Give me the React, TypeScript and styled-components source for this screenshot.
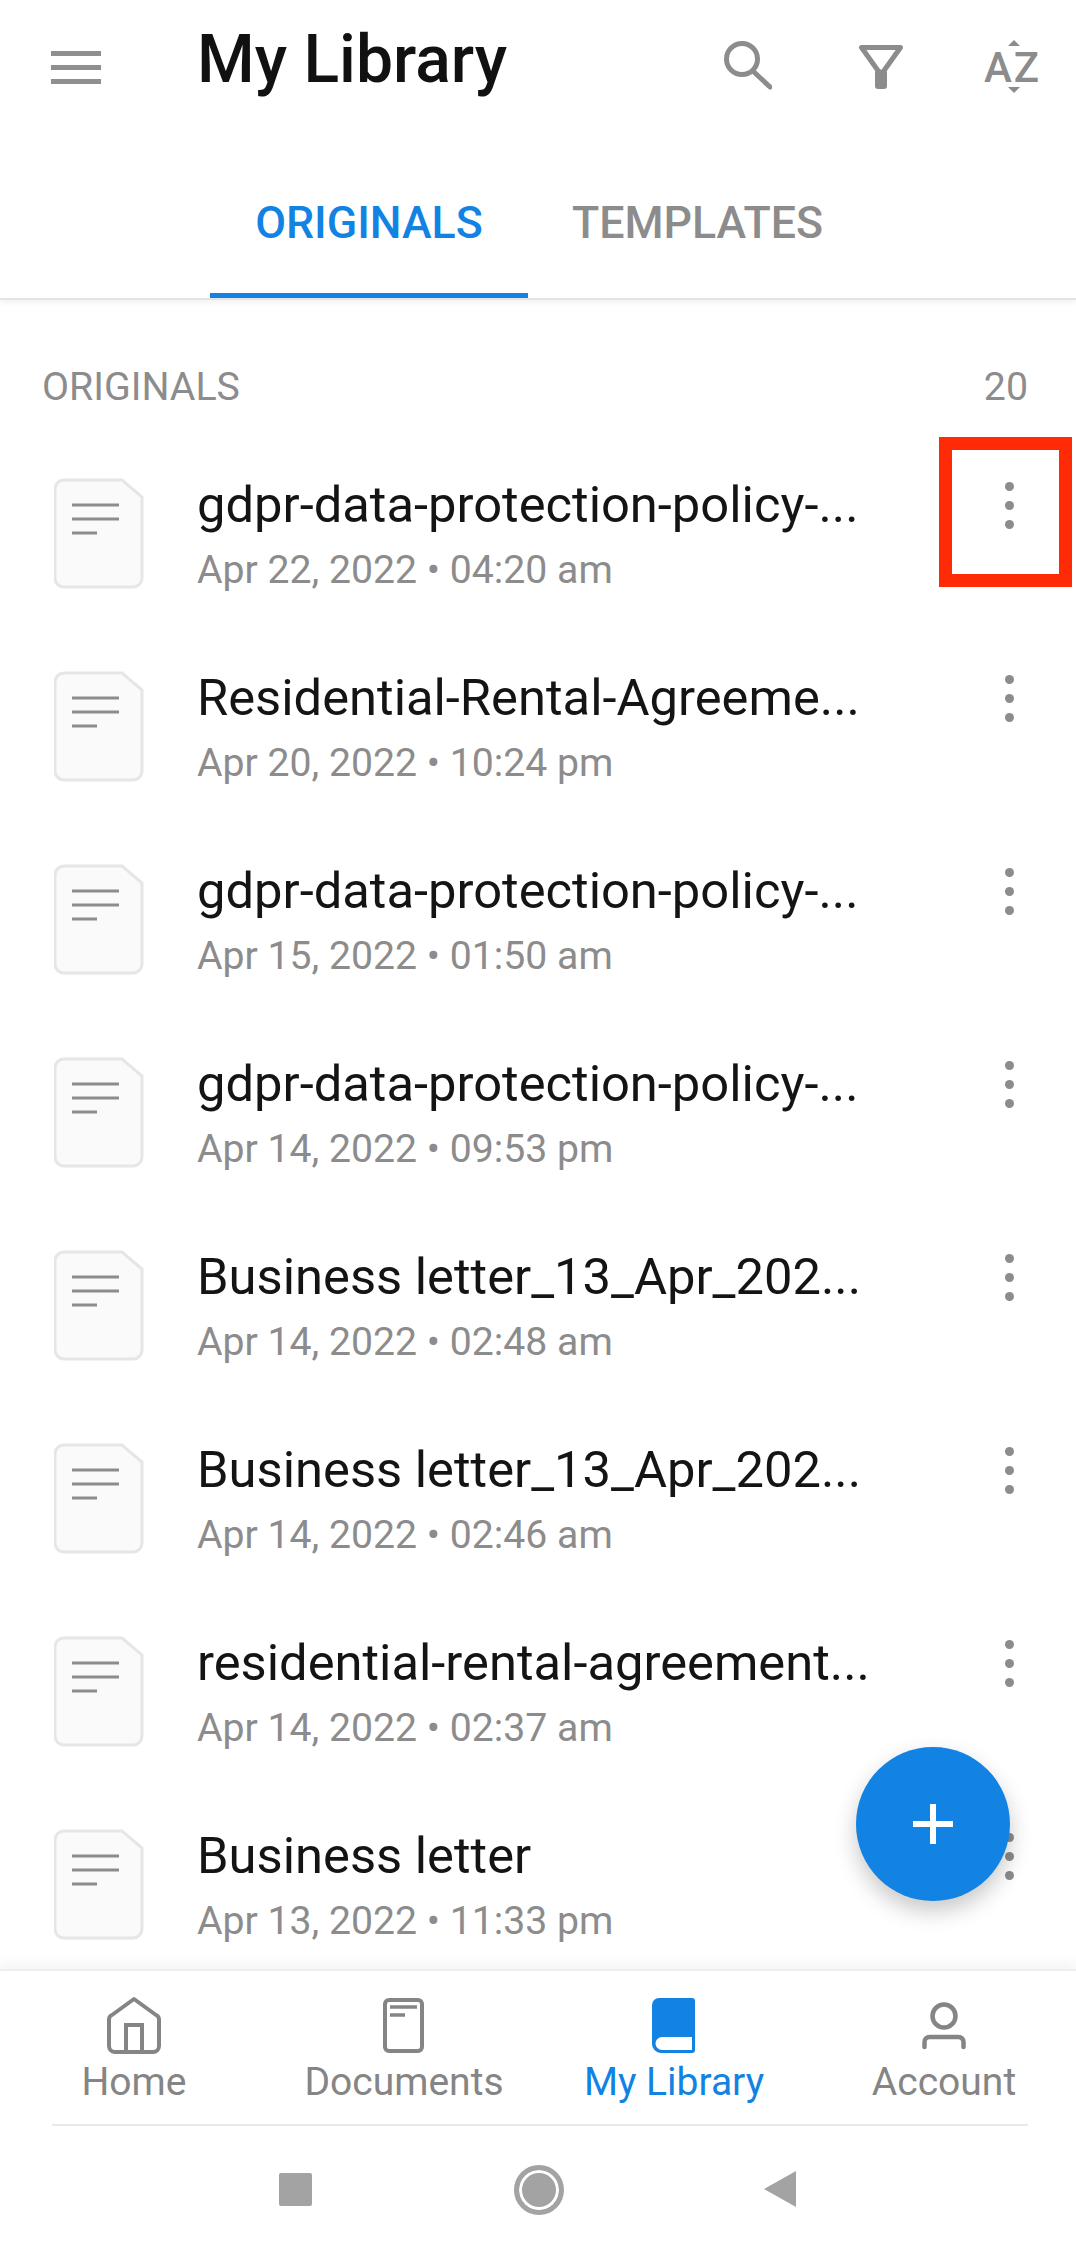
import React from 'react';
import styled, { createGlobalStyle } from 'styled-components';

const BLUE = '#1283e3';
const GREY = '#8c8c8c';

const GlobalStyle = createGlobalStyle`
  html, body {
    margin: 0;
    padding: 0;
    background: #ffffff;
  }
  * {
    box-sizing: border-box;
  }
`;

const Screen = styled.div`
  position: relative;
  width: 1076px;
  height: 2254px;
  display: flex;
  flex-direction: column;
  overflow: hidden;
  background: #ffffff;
  font-family: Roboto, 'Liberation Sans', sans-serif;
`;

const TopBar = styled.header`
  height: 122px;
  flex: none;
  display: flex;
  align-items: flex-start;
  padding: 10px 0 0 51px;
`;

const Burger = styled.div`
  width: 50px;
  height: 33px;
  margin-top: 41px;
  flex: none;
  display: flex;
  flex-direction: column;
  justify-content: space-between;

  span {
    display: block;
    height: 5px;
    background: #8f8f8f;
  }
`;

const Title = styled.h1`
  margin: 16px 0 0 96px;
  flex: 1;
  font-size: 66px;
  line-height: 68px;
  font-weight: 500;
  color: #111111;
`;

const TopIcons = styled.div`
  display: flex;
  width: 354px;
  flex: none;
  gap: 84px;
  padding-top: 26px;
`;

const TopIcon = styled.svg`
  width: 50px;
  height: 54px;
  flex: none;
  color: ${GREY};
`;

const SortIcon = styled.div`
  position: relative;
  width: 56px;
  height: 54px;
  margin: 4px 0 0 -6px;
  flex: none;
  display: flex;
  align-items: center;
  font-size: 42px;
  font-weight: 500;
  letter-spacing: 2px;
  color: ${GREY};

  &::before,
  &::after {
    content: '';
    position: absolute;
    left: 24px;
    border-left: 6px solid transparent;
    border-right: 6px solid transparent;
  }
  &::before {
    top: 0;
    border-bottom: 6px solid ${GREY};
  }
  &::after {
    bottom: 1px;
    border-top: 6px solid ${GREY};
  }
`;

const Tabs = styled.nav`
  height: 178px;
  flex: none;
  display: flex;
  padding-left: 210px;
  border-bottom: 2px solid #e4e4e4;
  box-shadow: 0 3px 5px rgba(0, 0, 0, 0.05);
  position: relative;
`;

const Tab = styled.div<{ $active?: boolean }>`
  width: ${({ $active }) => ($active ? '318px' : 'auto')};
  height: 176px;
  margin-right: ${({ $active }) => ($active ? '44px' : '0')};
  padding-top: 74px;
  text-align: center;
  font-size: 44.7px;
  line-height: 54px;
  font-weight: 500;
  color: ${({ $active }) => ($active ? BLUE : GREY)};
  border-bottom: 5px solid ${({ $active }) => ($active ? BLUE : 'transparent')};
`;

const List = styled.div`
  flex: 1;
  min-height: 0;
  overflow: hidden;
`;

const SectionHead = styled.div`
  display: flex;
  justify-content: space-between;
  padding: 65px 48px 0 42px;
  height: 177px;
  font-size: 39.3px;
  line-height: 44px;
  color: ${GREY};
`;

const Row = styled.div`
  height: 193px;
  display: flex;
  align-items: flex-start;
  padding-left: 54px;
`;

const FileIcon = styled.svg`
  width: 90px;
  height: 112px;
  flex: none;
  margin-top: 1px;
`;

const RowText = styled.div`
  width: 690px;
  margin-left: 53px;
  flex: none;
`;

const RowName = styled.div`
  font-size: 50.7px;
  line-height: 56px;
  color: #141414;
  white-space: nowrap;
`;

const RowDate = styled.div`
  margin-top: 15px;
  font-size: 39.2px;
  line-height: 44px;
  color: ${GREY};
  white-space: nowrap;
`;

const MenuButton = styled.div<{ $marked?: boolean }>`
  position: relative;
  width: 9px;
  height: 47px;
  margin: 5px 0 0 118px;
  flex: none;
  display: flex;
  flex-direction: column;
  justify-content: space-between;

  i {
    display: block;
    width: 9px;
    height: 9px;
    border-radius: 50%;
    background: ${GREY};
  }

  ${({ $marked }) =>
    $marked &&
    `
    &::after {
      content: '';
      position: absolute;
      left: -66px;
      top: -45px;
      width: 133px;
      height: 150px;
      box-sizing: border-box;
      border: 13px solid #ff2a06;
    }
  `}
`;

const Fab = styled.div`
  position: absolute;
  left: 856px;
  top: 1747px;
  width: 154px;
  height: 154px;
  border-radius: 50%;
  background: ${BLUE};
  box-shadow: 0 10px 22px rgba(0, 0, 0, 0.22);
  display: flex;
  align-items: center;
  justify-content: center;
`;

const BottomNav = styled.div`
  height: 155px;
  flex: none;
  display: grid;
  grid-template-columns: repeat(4, 270px);
  margin-left: -1px;
  padding-top: 25px;
  border-top: 2px solid #eeeeee;
  box-shadow: 0 -8px 10px rgba(0, 0, 0, 0.04);
  background: #ffffff;
  position: relative;
`;

const NavItem = styled.div<{ $active?: boolean }>`
  display: flex;
  flex-direction: column;
  align-items: center;
  color: ${({ $active }) => ($active ? BLUE : '#858585')};
  font-size: 39px;
  line-height: 46px;

  svg {
    width: 60px;
    height: 60px;
    margin-bottom: 3px;
  }
`;

const SystemBar = styled.div`
  height: 130px;
  flex: none;
  position: relative;
  display: flex;
  align-items: flex-start;
  padding: 44px 0 0 279px;

  &::before {
    content: '';
    position: absolute;
    left: 52px;
    right: 48px;
    top: 0;
    height: 2px;
    background: #eaeaea;
  }
`;

const SquareKey = styled.div`
  width: 33px;
  height: 33px;
  margin-top: 5px;
  background: #a3a3a3;
  border-radius: 2px;
`;

const CircleKey = styled.div`
  width: 50px;
  height: 50px;
  margin: -3px 0 0 202px;
  border-radius: 50%;
  background: #a3a3a3;
  border: 5px solid #a3a3a3;
  box-shadow: inset 0 0 0 3px #ffffff;
`;

const BackKey = styled.div`
  width: 0;
  height: 0;
  margin: 3px 0 0 200px;
  border-top: 18px solid transparent;
  border-bottom: 18px solid transparent;
  border-right: 32px solid #a3a3a3;
`;

const files = [
  { name: 'gdpr-data-protection-policy-...', date: 'Apr 22, 2022 • 04:20 am' },
  { name: 'Residential-Rental-Agreeme...', date: 'Apr 20, 2022 • 10:24 pm' },
  { name: 'gdpr-data-protection-policy-...', date: 'Apr 15, 2022 • 01:50 am' },
  { name: 'gdpr-data-protection-policy-...', date: 'Apr 14, 2022 • 09:53 pm' },
  { name: 'Business letter_13_Apr_202...', date: 'Apr 14, 2022 • 02:48 am' },
  { name: 'Business letter_13_Apr_202...', date: 'Apr 14, 2022 • 02:46 am' },
  { name: 'residential-rental-agreement...', date: 'Apr 14, 2022 • 02:37 am' },
  { name: 'Business letter', date: 'Apr 13, 2022 • 11:33 pm' },
];

const DocGlyph = () => (
  <FileIcon viewBox="0 0 90 112" fill="none">
    <path
      d="M10 2H68L88 19V100a9 9 0 0 1-9 9H10a9 9 0 0 1-9-9V11a9 9 0 0 1 9-9Z"
      fill="#fafafa"
      stroke="#e6e6e6"
      strokeWidth="3"
    />
    <path d="M18 27H65M18 41H65M18 55H43" stroke="#8c8c8c" strokeWidth="3" />
  </FileIcon>
);

export default function App() {
  return (
    <Screen>
      <GlobalStyle />
      <TopBar>
        <Burger>
          <span />
          <span />
          <span />
        </Burger>
        <Title>My Library</Title>
        <TopIcons>
          <TopIcon viewBox="0 0 50 54" fill="none" stroke="currentColor">
            <circle cx="20" cy="23" r="15.5" strokeWidth="5" />
            <path d="M32 36L48 51" strokeWidth="5" strokeLinecap="round" />
          </TopIcon>
          <TopIcon viewBox="0 0 50 54" fill="none" stroke="currentColor">
            <path d="M5.5 11.5H44.5L27 36H23Z" strokeWidth="5" strokeLinejoin="round" />
            <rect x="19" y="34" width="12" height="19" rx="3" fill="currentColor" stroke="none" />
          </TopIcon>
          <SortIcon>AZ</SortIcon>
        </TopIcons>
      </TopBar>
      <Tabs>
        <Tab $active>ORIGINALS</Tab>
        <Tab>TEMPLATES</Tab>
      </Tabs>
      <List>
        <SectionHead>
          <span>ORIGINALS</span>
          <span>20</span>
        </SectionHead>
        {files.map((file, i) => (
          <Row key={i}>
            <DocGlyph />
            <RowText>
              <RowName>{file.name}</RowName>
              <RowDate>{file.date}</RowDate>
            </RowText>
            <MenuButton $marked={i === 0}>
              <i />
              <i />
              <i />
            </MenuButton>
          </Row>
        ))}
      </List>
      <BottomNav>
        <NavItem>
          <svg viewBox="0 0 60 60" fill="none" stroke="currentColor" strokeWidth="4">
            <path d="M30 3L8 19a5 5 0 0 0-3 5V50a6 6 0 0 0 6 6H49a6 6 0 0 0 6-6V24a5 5 0 0 0-3-5Z" strokeLinejoin="round" />
            <path d="M22 56V29H38V56" />
          </svg>
          Home
        </NavItem>
        <NavItem>
          <svg viewBox="0 0 60 60" fill="none" stroke="currentColor" strokeWidth="4">
            <rect x="11" y="4" width="37" height="51" rx="4" />
            <path d="M16 11H43M16 19H31" strokeWidth="3.5" />
          </svg>
          Documents
        </NavItem>
        <NavItem $active>
          <svg viewBox="0 0 60 60" fill="none">
            <path d="M15 2H48a3 3 0 0 1 3 3V54a3 3 0 0 1-3 3H17a9 9 0 0 1-9-9V9a7 7 0 0 1 7-7Z" fill="currentColor" />
            <path d="M18 41H48V54H18a6.5 6.5 0 0 1 0-13Z" fill="#ffffff" />
          </svg>
          My Library
        </NavItem>
        <NavItem>
          <svg viewBox="0 0 60 60" fill="none" stroke="currentColor" strokeWidth="4.5">
            <circle cx="30" cy="20" r="11.5" />
            <path d="M10.5 51V46a5 5 0 0 1 5-5H44.5a5 5 0 0 1 5 5V51" strokeLinecap="round" />
          </svg>
          Account
        </NavItem>
      </BottomNav>
      <SystemBar>
        <SquareKey />
        <CircleKey />
        <BackKey />
      </SystemBar>
      <Fab>
        <svg width="42" height="42" viewBox="0 0 42 42" fill="none" stroke="#ffffff" strokeWidth="6">
          <path d="M21 1V41M1 21H41" />
        </svg>
      </Fab>
    </Screen>
  );
}
